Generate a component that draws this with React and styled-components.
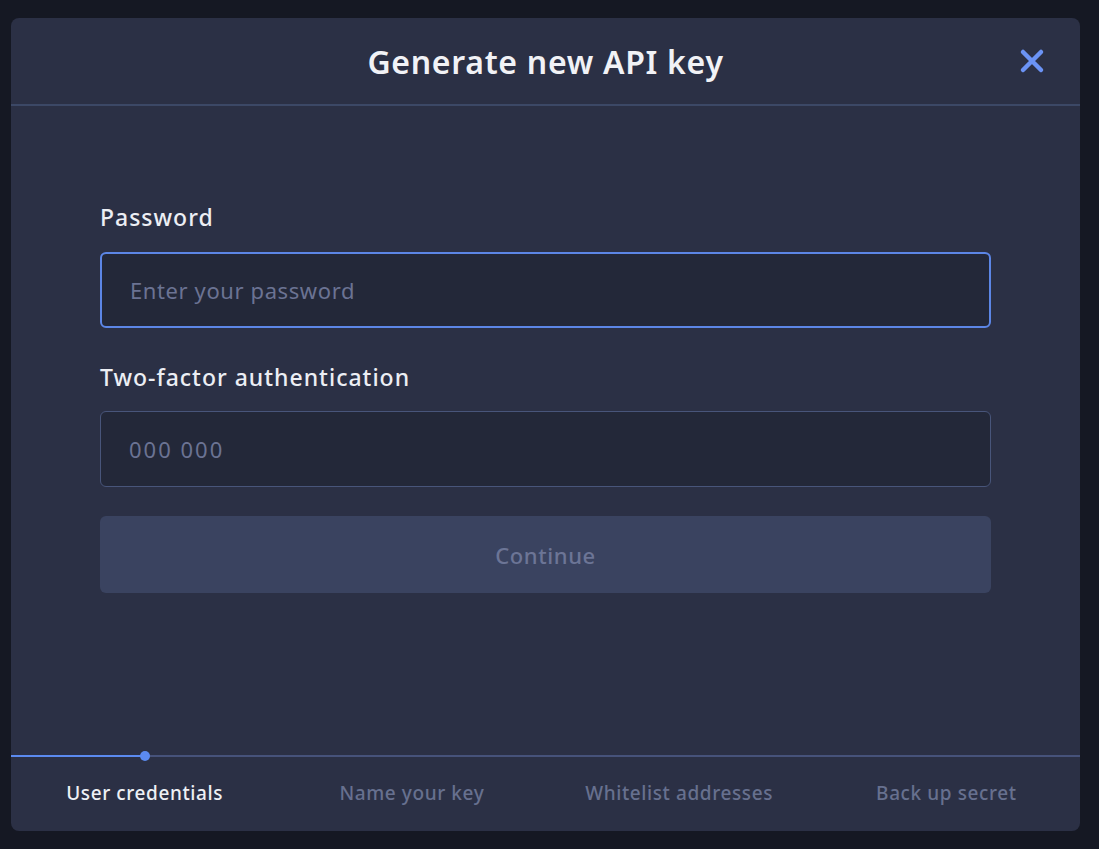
import React from 'react'
import styled, { createGlobalStyle } from 'styled-components'

const GlobalStyle = createGlobalStyle`
  html, body {
    margin: 0;
    padding: 0;
    background: #151823;
    font-family: "Noto Sans", "Open Sans", sans-serif;
  }
  * { box-sizing: border-box; }
`

const Backdrop = styled.div`
  width: 1099px;
  height: 849px;
  padding: 18px 19px 18px 11px;
  background: #151823;
  display: flex;
`

const Modal = styled.div`
  flex: 1;
  display: flex;
  flex-direction: column;
  background: #2b3045;
  border-radius: 8px;
  overflow: hidden;
`

const Header = styled.div`
  position: relative;
  height: 88px;
  display: flex;
  align-items: center;
  justify-content: center;
  border-bottom: 2px solid #3c4866;
`

const Title = styled.h1`
  margin: 0;
  font-size: 32px;
  font-weight: 600;
  color: #f1f2f6;
  letter-spacing: 0.7px;
`

const CloseButton = styled.button`
  position: absolute;
  right: 34px;
  top: 29px;
  width: 28px;
  height: 28px;
  padding: 0;
  border: none;
  background: none;
  cursor: pointer;
  display: flex;
  align-items: center;
  justify-content: center;
`

const Body = styled.div`
  flex: 1;
  padding: 98px 89px 0 89px;
  display: flex;
  flex-direction: column;
`

const Label = styled.label`
  font-size: 23px;
  font-weight: 500;
  color: #eceef4;
  line-height: 26px;
  letter-spacing: 1px;
  margin-bottom: ${p => p.$gap || 22}px;
`

const Input = styled.input`
  height: 76px;
  width: 100%;
  padding: 0 28px;
  margin-bottom: ${p => p.$gap || 37}px;
  border-radius: 6px;
  border: ${p => (p.$focused ? '2px solid #5c86e6' : '1.5px solid #48557a')};
  background: #232839;
  color: #eceef4;
  font-family: inherit;
  font-size: 22px;
  letter-spacing: ${p => p.$tracking || 0.6}px;
  outline: none;
  &::placeholder {
    color: #6b7393;
  }
`

const Button = styled.button`
  height: 77px;
  width: 100%;
  border: none;
  border-radius: 6px;
  background: #3a4360;
  color: #6c7596;
  font-family: inherit;
  font-size: 22px;
  font-weight: 500;
  letter-spacing: 0.6px;
`

const Footer = styled.div`
  display: flex;
  flex-direction: column;
`

const Track = styled.div`
  position: relative;
  height: 2px;
  background: #46527a;
`

const TrackFill = styled.div`
  position: absolute;
  left: 0;
  top: 0;
  height: 2px;
  background: #5b8af0;
`

const TrackDot = styled.div`
  position: absolute;
  top: -4px;
  width: 10px;
  height: 10px;
  margin-left: -5px;
  border-radius: 50%;
  background: #5b8af0;
`

const Steps = styled.div`
  display: grid;
  grid-template-columns: repeat(4, 1fr);
  height: 74px;
  align-items: center;
`

const Step = styled.div`
  text-align: center;
  font-size: 19px;
  font-weight: 500;
  letter-spacing: 0.6px;
  padding-bottom: 2px;
  color: ${p => (p.$active ? '#eef0f5' : '#67708f')};
`

const steps = ['User credentials', 'Name your key', 'Whitelist addresses', 'Back up secret']

export default function App() {
  const current = 0
  const pct = ((current + 0.5) / steps.length) * 100
  return (
    <>
      <GlobalStyle />
      <Backdrop>
        <Modal>
          <Header>
            <Title>Generate new API key</Title>
            <CloseButton aria-label="Close">
              <svg width="26" height="26" viewBox="0 0 26 26">
                <path d="M4 4 L22 22 M22 4 L4 22" stroke="#6b93f5" strokeWidth="4.5" strokeLinecap="round" />
              </svg>
            </CloseButton>
          </Header>
          <Body>
            <Label>Password</Label>
            <Input $focused type="password" placeholder="Enter your password" $gap={36} />
            <Label $gap={21}>Two-factor authentication</Label>
            <Input placeholder="000 000" $gap={29} $tracking={2} />
            <Button>Continue</Button>
          </Body>
          <Footer>
            <Track>
              <TrackFill style={{ width: `${pct}%` }} />
              <TrackDot style={{ left: `${pct}%` }} />
            </Track>
            <Steps>
              {steps.map((s, i) => (
                <Step key={s} $active={i === current}>{s}</Step>
              ))}
            </Steps>
          </Footer>
        </Modal>
      </Backdrop>
    </>
  )
}
